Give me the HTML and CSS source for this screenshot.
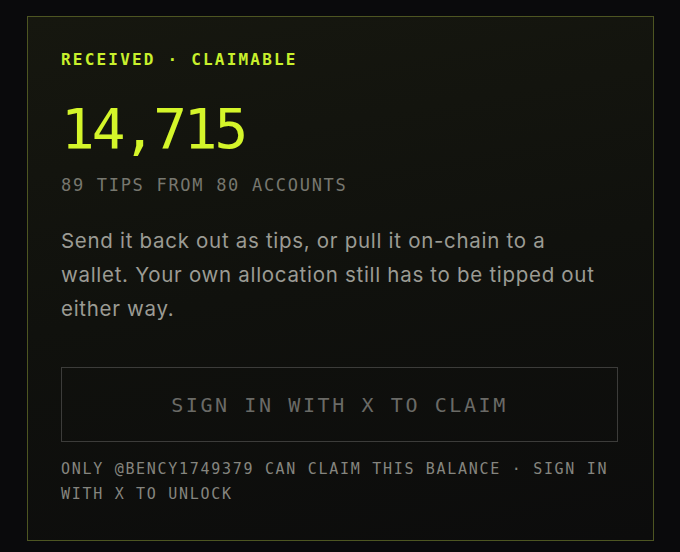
FILE: index.html
```html
<!DOCTYPE html>
<html>
<head>
<meta charset="utf-8">
<link rel="stylesheet" href="styles.css">
</head>
<body>
<div class="card">
  <div class="label">RECEIVED · CLAIMABLE</div>
  <div class="amount">14,715</div>
  <div class="sub">89 TIPS FROM 80 ACCOUNTS</div>
  <p class="desc">Send it back out as tips, or pull it on-chain to a wallet. Your own allocation still has to be tipped out either way.</p>
  <button class="claim">SIGN IN WITH X TO CLAIM</button>
  <p class="note">ONLY @BENCY1749379 CAN CLAIM THIS BALANCE · SIGN IN WITH X TO UNLOCK</p>
</div>
</body>
</html>
```
FILE: styles.css
```css
html, body {
  margin: 0;
  padding: 0;
  background: #0a0a0c;
  width: 680px;
  height: 552px;
  overflow: hidden;
}
body {
  padding: 16px 0 0 27px;
  box-sizing: border-box;
}
.card {
  box-sizing: border-box;
  width: 627px;
  height: 525px;
  border: 1px solid #4d5522;
  background: linear-gradient(170deg, #16170f 0%, #10110d 50%, #0c0c0c 100%);
  padding: 33px 35px 0 33px;
  display: flex;
  flex-direction: column;
  font-family: "DejaVu Sans Mono", monospace;
}
.label {
  font-size: 16px;
  line-height: 20px;
  font-weight: bold;
  letter-spacing: 2.2px;
  color: #c8f02c;
}
.amount {
  margin-top: 27px;
  font-size: 56px;
  line-height: 64px;
  letter-spacing: -3px;
  color: #d4f52a;
}
.sub {
  margin-top: 14px;
  font-size: 17px;
  line-height: 20px;
  letter-spacing: 1.7px;
  color: #77776f;
}
.desc {
  margin: 29px 0 0 0;
  max-width: 550px;
  font-family: "Inter", sans-serif;
  font-size: 20.5px;
  line-height: 34px;
  letter-spacing: 0.7px;
  color: #9b9b94;
}
.claim {
  margin-top: 41px;
  width: 100%;
  height: 75px;
  flex: none;
  background: transparent;
  border: 1px solid #3c3c3a;
  font-family: "DejaVu Sans Mono", monospace;
  font-size: 20px;
  letter-spacing: 2.6px;
  color: #6a6a66;
  padding: 0;
}
.note {
  margin: 15px 0 0 0;
  font-size: 15px;
  line-height: 25px;
  letter-spacing: 1.7px;
  color: #85857f;
}
```
